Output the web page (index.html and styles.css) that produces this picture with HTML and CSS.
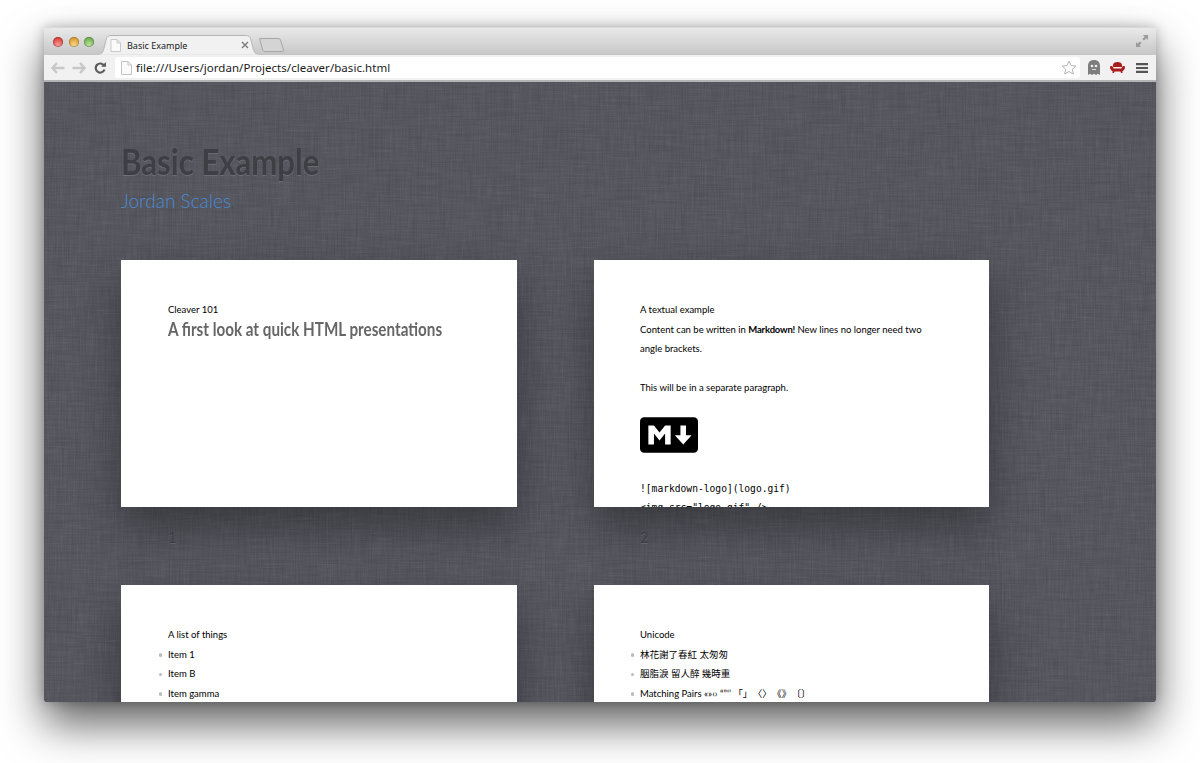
FILE: index.html
```
<!DOCTYPE html>
<html lang="en">
<head>
<meta charset="utf-8">
<title>Basic Example</title>
<link rel="stylesheet" href="styles.css">
</head>
<body>
<div class="window">
  <div class="tabbar">
    <div class="lights"><span class="light red"></span><span class="light amber"></span><span class="light green"></span></div>
    <div class="tab">
      <svg class="tab-shape" width="162" height="20" viewBox="0 0 162 20"><path d="M0 19.5C4 19.5 5 17 6 13L8 5C9 1.500 10 .5 13 .5H147C151 .5 152 1.500 153 5L155 13C156 17 157 19.500 162 19.500" fill="#f1f1f1" stroke="#b5b5b5"/><path d="M1 20H161V19.500H1Z" fill="#f1f1f1"/></svg>
      <svg class="page-ico" width="11" height="13" viewBox="0 0 11 13"><path d="M1 .5H7L10.500 4V12.500H1Z" fill="#fafafa" stroke="#c9c9c9"/><path d="M7 .5V4H10.500" fill="none" stroke="#c9c9c9"/></svg>
      <span class="tab-title">Basic Example</span>
      <svg class="tab-close" width="8" height="8" viewBox="0 0 8 8"><path d="M1 1L7 7M7 1L1 7" stroke="#777" stroke-width="1.300"/></svg>
    </div>
    <svg class="newtab" width="25" height="15" viewBox="0 0 25 15"><path d="M.5 1.500H19C20.500 1.500 21 2 21.500 3L24.500 13C24.500 14 24 14.500 23 14.500H6C4.500 14.500 4 14 3.700 13L.5 1.500Z" fill="#d4d4d4" stroke="#a6a6a6"/></svg>
    <svg class="expand" width="12" height="12" viewBox="0 0 12 12"><path d="M12 0V5L10.300 3.300L8 5.600L6.400 4L8.700 1.700L7 0ZM0 12V7L1.700 8.700L4 6.400L5.600 8L3.300 10.300L5 12Z" fill="#9a9a9a"/></svg>
  </div>
  <div class="toolbar">
    <svg class="tool" width="14" height="12" viewBox="0 0 14 12"><path d="M6 1L1.500 6L6 11M2 6H13.500" fill="none" stroke="#c8c8c8" stroke-width="2.400"/></svg>
    <svg class="tool" width="14" height="12" viewBox="0 0 14 12"><path d="M8 1L12.500 6L8 11M12 6H.5" fill="none" stroke="#c8c8c8" stroke-width="2.400"/></svg>
    <svg class="tool" width="12" height="12" viewBox="0 0 12 12"><path d="M10 3.500A4.500 4.500 0 1 0 10.500 7.500" fill="none" stroke="#5b5b5b" stroke-width="2.200"/><path d="M7 4.800H12V0Z" fill="#5b5b5b"/></svg>
    <div class="omnibox">
      <svg class="page-ico" width="11" height="14" viewBox="0 0 11 14"><path d="M.5 .5H7L10.500 4V13.500H.5Z" fill="#fafafa" stroke="#c4c4c4"/><path d="M7 .5V4H10.500" fill="none" stroke="#c4c4c4"/></svg>
      <span class="url">file:///Users/jordan/Projects/cleaver/basic.html</span>
      <svg class="star" width="16" height="15" viewBox="0 0 16 15"><path d="M8 1L10 5.600L15 6L11.200 9.300L12.400 14L8 11.500L3.600 14L4.800 9.300L1 6L6 5.600Z" fill="#fff" stroke="#b5b5b5"/></svg>
    </div>
    <svg class="ext ghost" width="12" height="15" viewBox="0 0 12 15"><path d="M0 15V6C0 2 2.500 0 6 0S12 2 12 6V15L10 13.800L8 15L6 13.800L4 15L2 13.800Z" fill="#7d7d7d"/><circle cx="4" cy="6" r="1.300" fill="#eee"/><circle cx="8" cy="6" r="1.300" fill="#eee"/><path d="M4 9.500H8" stroke="#ddd"/></svg>
    <svg class="ext sofa" width="15" height="11" viewBox="0 0 15 11"><path d="M3 5V3C3 1 5 0 7.500 0S12 1 12 3V5Z" fill="#a81c1c"/><path d="M0 5C0 3.500 2.500 3.500 3 5L3.500 6.500H11.500L12 5C12.500 3.500 15 3.500 15 5C15 7 14 8.500 12.500 9V11H11L10.500 9.500H4.500L4 11H2.500V9C1 8.500 0 7 0 5Z" fill="#a81c1c"/></svg>
    <svg class="ext menu" width="12" height="10" viewBox="0 0 12 10"><path d="M0 0H12V2.200H0ZM0 3.900H12V6.100H0ZM0 7.800H12V10H0Z" fill="#555"/></svg>
  </div>
  <main class="page">
    <svg class="linen" width="1112" height="620" aria-hidden="true">
      <defs>
        <filter id="weft" x="0" y="0" width="100%" height="100%"><feTurbulence type="fractalNoise" baseFrequency="0.025 0.7" numOctaves="2" seed="4"/><feColorMatrix values="0 0 0 0 0  0 0 0 0 0  0 0 0 0 0  1.300 0 0 0 -.5"/></filter>
        <filter id="warp" x="0" y="0" width="100%" height="100%"><feTurbulence type="fractalNoise" baseFrequency="0.7 0.025" numOctaves="2" seed="9"/><feColorMatrix values="0 0 0 0 0  0 0 0 0 0  0 0 0 0 0  1.300 0 0 0 -.5"/></filter>
        <filter id="weft-light" x="0" y="0" width="100%" height="100%"><feTurbulence type="fractalNoise" baseFrequency="0.04 0.6" numOctaves="2" seed="17"/><feColorMatrix values="0 0 0 0 1  0 0 0 0 1  0 0 0 0 1  1.500 0 0 0 -.7"/></filter>
        <filter id="warp-light" x="0" y="0" width="100%" height="100%"><feTurbulence type="fractalNoise" baseFrequency="0.6 0.04" numOctaves="2" seed="23"/><feColorMatrix values="0 0 0 0 1  0 0 0 0 1  0 0 0 0 1  1.500 0 0 0 -.7"/></filter>
      </defs>
      <rect class="linen-dark" width="1112" height="620" filter="url(#weft)"/>
      <rect class="linen-dark" width="1112" height="620" filter="url(#warp)"/>
      <rect class="linen-light" width="1112" height="620" filter="url(#weft-light)"/>
      <rect class="linen-light" width="1112" height="620" filter="url(#warp-light)"/>
    </svg>
    <header class="intro">
      <h1 class="deck-title">Basic Example</h1>
      <p class="byline"><a class="author">Jordan Scales</a><span class="comma">,</span></p>
    </header>
    <div class="deck">
      <section class="slide-wrap">
        <div class="slide">
          <div class="line">Cleaver 101</div>
          <h2 class="slide-heading">A first look at quick HTML presentations</h2>
        </div>
        <div class="slide-num">1</div>
      </section>
      <section class="slide-wrap">
        <div class="slide">
          <div class="line">A textual example</div>
          <p class="para">Content can be written in <strong>Markdown!</strong> New lines no longer need two angle brackets.</p>
          <p class="para">This will be in a separate paragraph.</p>
          <svg class="md-logo" width="58" height="36" viewBox="0 0 208 128"><rect width="208" height="128" rx="15" fill="#000"/><path d="M30 98V30h20l20 25 20-25h20v68H90V59L70 84 50 59v39zm125 0l-30-33h20V30h20v35h20z" fill="#fff"/></svg>
          <pre class="code">![markdown-logo](logo.gif)
&lt;img src="logo.gif" /&gt;</pre>
        </div>
        <div class="slide-num">2</div>
      </section>
      <section class="slide-wrap">
        <div class="slide">
          <div class="line">A list of things</div>
          <ul class="list"><li>Item 1</li><li>Item B</li><li>Item gamma</li></ul>
        </div>
      </section>
      <section class="slide-wrap">
        <div class="slide">
          <div class="line">Unicode</div>
          <ul class="list"><li>林花謝了春紅 太匆匆</li><li>胭脂淚 留人醉 幾時重</li><li>Matching Pairs «»‹› “”‘’ <span class="pairs">「」 〈〉 《》 〔〕</span></li></ul>
        </div>
      </section>
    </div>
  </main>
</div>
</body>
</html>
```
FILE: styles.css
```
* { box-sizing: border-box; }
html, body { margin: 0; height: 763px; overflow: hidden; background: #fff; }
body { padding: 27px 44px 61px; font-family: "Lato", "Noto Sans CJK TC", sans-serif; }

.window {
  height: 675px;
  display: flex;
  flex-direction: column;
  border-radius: 4px 4px 2px 2px;
  overflow: hidden;
  box-shadow: 0 22px 44px rgba(0,0,0,.62), 0 0 12px rgba(0,0,0,.25);
}

.tabbar {
  height: 28px;
  flex: none;
  display: flex;
  align-items: flex-end;
  position: relative;
  background: linear-gradient(#e9e9e9, #c6c6c6);
  border-top: 1px solid #d8d8d8;
}
.lights { display: flex; gap: 5.5px; position: absolute; left: 9px; top: 9px; }
.light { width: 10px; height: 10px; border-radius: 50%; box-shadow: inset 0 0 0 .5px rgba(0,0,0,.35); }
.red { background: radial-gradient(circle at 50% 75%, #f79b96, #d9403b 70%); }
.amber { background: radial-gradient(circle at 50% 75%, #f8d68a, #d99a2d 70%); }
.green { background: radial-gradient(circle at 50% 75%, #b9e29a, #6fae4d 70%); }

.tab {
  width: 162px;
  height: 20px;
  margin-left: 54px;
  display: flex;
  align-items: center;
  position: relative;
  padding: 0 8px 0 12px;
}
.tab-shape { position: absolute; left: 0; top: 0; }
.tab .page-ico { position: relative; margin-right: 6px; }
.tab-title { position: relative; font-family: "Noto Sans", sans-serif; font-size: 9px; color: #222; flex: 1; white-space: nowrap; }
.tab-close { position: relative; margin-right: 3px; }
.newtab { margin-left: -1px; margin-bottom: 3px; }
.expand { position: absolute; right: 8px; top: 7px; }

.toolbar {
  height: 27px;
  flex: none;
  display: flex;
  align-items: center;
  padding-left: 7px;
  background: #f1f1f1;
  border-bottom: 2px solid #b4b4b6;
}
.tool { margin-right: 8px; }
.tool:first-child { margin-right: 7px; }
.omnibox {
  width: 965px;
  height: 21px;
  margin-left: 1px;
  display: flex;
  align-items: center;
  padding: 0 3px 0 6px;
  background: #fff;
  border-radius: 3px;
}
.url { flex: 1; margin-left: 4px; font-family: "Noto Sans", sans-serif; font-size: 11.5px; letter-spacing: .04px; color: #1a1a1a; white-space: nowrap; }
.ext { flex: none; }
.ghost { margin-left: 8px; }
.sofa { margin-left: 10px; }
.menu { margin-left: 11px; }

.page {
  flex: 1;
  min-height: 0;
  overflow: hidden;
  position: relative;
  padding: 56px 0 0 77px;
  background-color: #585961;
}
.linen { position: absolute; left: 0; top: 0; }
.linen-dark { opacity: .11; }
.linen-light { opacity: .06; }
.intro, .deck { position: relative; }

.deck-title {
  margin: 0;
  font-family: "Lato", sans-serif;
  font-size: 36px;
  line-height: 46px;
  font-weight: 700;
  color: #3e3f45;
  text-shadow: 0 1px 1px rgba(255,255,255,.14);
  transform: scaleX(.865);
  transform-origin: left;
  white-space: nowrap;
}
.byline { margin: 3px 0 0; font-size: 19px; line-height: 28px; font-weight: 300; }
.author { color: #4a8bd6; }
.comma { color: #333; font-size: 10px; }

.deck {
  margin-top: 42px;
  display: grid;
  grid-template-columns: 396px 395px;
  column-gap: 77px;
  row-gap: 78px;
}
.slide {
  height: 247px;
  padding: 40.400px 47px 0;
  overflow: hidden;
  background: #fff;
  color: #000;
  font-size: 9.500px;
  line-height: 19.400px;
  box-shadow: 0 20px 40px rgba(0,0,0,.33);
}
.slide-wrap:nth-child(even) .slide { padding-left: 46px; }
.slide-wrap:nth-child(even) .slide-num { padding-left: 46px; }
.line { height: 19.400px; }
.slide-heading {
  margin: 0;
  font-size: 18px;
  line-height: 19.400px;
  font-weight: 700;
  color: #666;
  white-space: nowrap;
  transform: scaleX(.846);
  transform-origin: left;
}
.para { margin: 0 0 19.400px; }
.para strong { letter-spacing: -.2px; }
.md-logo { display: block; margin-bottom: 26px; }
.code {
  margin: 0;
  font-family: "DejaVu Sans Mono", monospace;
  font-size: 9.650px;
  line-height: 19.400px;
}
.list { margin: 0; padding: 0; list-style: none; }
.list li::before {
  content: "";
  display: inline-block;
  width: 3.500px;
  height: 3.500px;
  margin: 0 6px 1px -9.500px;
  border-radius: 50%;
  background: #bcbcbc;
}
.pairs { word-spacing: -2px; }
.slide-num {
  height: 0;
  padding-left: 47px;
  font-size: 15px;
  line-height: 20px;
  color: #3c3d43;
  text-shadow: 0 1px 0 rgba(255,255,255,.12);
  transform: translateY(20px);
}
```
